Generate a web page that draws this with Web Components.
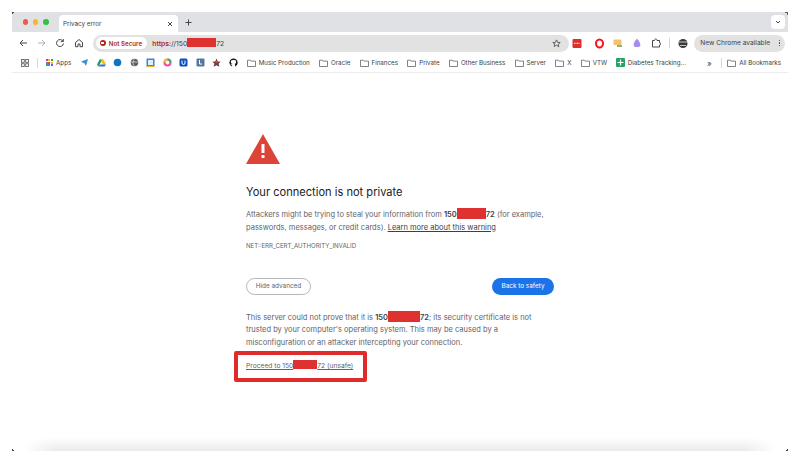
<!DOCTYPE html>
<html>
<head>
<meta charset="utf-8">
<title>Privacy error</title>
<style>
  html, body { margin: 0; height: 100%; background: #fff; }
  body { font-family: Inter, "Liberation Sans", sans-serif; overflow: hidden; }
</style>
</head>
<body>
<browser-window>
  <tab-strip slot="top"></tab-strip>
  <browser-toolbar slot="top"></browser-toolbar>
  <bookmark-bar slot="top"></bookmark-bar>
  <privacy-page></privacy-page>
</browser-window>

<script>
const FOLDER = `<svg width="9" height="8" viewBox="0 0 9 8" fill="none" stroke="#5f6368" stroke-width=".8"><path d="M.5 1.2h2.7l.8.9h4.5v5.4H.5z"/></svg>`;

class BlackOut extends HTMLElement {
  connectedCallback() {
    const w = this.getAttribute("w");
    const h = this.getAttribute("h") || 11;
    const a = this.getAttribute("a") || -2;
    const shadow = this.attachShadow({ mode: "open" });
    shadow.innerHTML = `<style>
      :host { display: inline-block; width: ${w}px; height: ${h}px; background: #e03131; vertical-align: ${a}px; }
    </style>`;
  }
}

class BrowserWindow extends HTMLElement {
  connectedCallback() {
    const shadow = this.attachShadow({ mode: "open" });
    shadow.innerHTML = `<style>
      :host { display: block; position: relative; margin: 12px 12px 0; height: 439px; }
      .frame { display: flex; flex-direction: column; height: 100%; }
      .main { flex: 1; min-height: 0; position: relative; }
      .shade { position: absolute; left: 12px; right: 12px; bottom: 0; height: 14px;
        background: linear-gradient(to bottom, rgba(225,225,225,0), rgba(225,225,225,.65));
        -webkit-mask-image: linear-gradient(to right, transparent, #000 4%, #000 96%, transparent);
        mask-image: linear-gradient(to right, transparent, #000 4%, #000 96%, transparent); }
      .corner { position: absolute; width: 3px; height: 3px; }
      .tl { left: 0; top: 0; background: linear-gradient(135deg, #2c4a5a 50%, transparent 50%); }
      .tr { right: 0; top: 0; background: linear-gradient(225deg, #3d6a70 50%, transparent 50%); }
      .bl { left: 0; bottom: 0; background: linear-gradient(45deg, #1f4f78 50%, transparent 50%); }
      .br { right: 0; bottom: 0; background: linear-gradient(315deg, #1f4f78 50%, transparent 50%); }
    </style>
    <div class="frame">
      <slot name="top"></slot>
      <div class="main"><slot></slot><div class="shade"></div></div>
    </div>
    <i class="corner tl"></i><i class="corner tr"></i><i class="corner bl"></i><i class="corner br"></i>`;
  }
}

class TabStrip extends HTMLElement {
  connectedCallback() {
    const shadow = this.attachShadow({ mode: "open" });
    shadow.innerHTML = `<style>
      :host { display: flex; align-items: flex-end; height: 20px; background: #dfe1e5; position: relative; }
      .lights { display: flex; gap: 4.6px; padding-left: 10.5px; width: 36.5px; box-sizing: border-box; height: 100%; align-items: center; margin-right: 10.5px; }
      .lights i { width: 6px; height: 6px; border-radius: 50%; }
      .tab { width: 119px; height: 17px; background: #fff; border-radius: 4px 4px 0 0; display: flex; align-items: center;
        padding: 0 5px 0 4px; box-sizing: border-box; font-size: 6.3px; color: #3c4043; justify-content: space-between; }
      .plus { margin-left: 7px; height: 100%; display: flex; align-items: center; }
      .drop { margin-left: auto; margin-right: 3px; align-self: flex-start; margin-top: 3px; width: 14px; height: 14px; background: #fff;
        border-radius: 4px; display: flex; align-items: center; justify-content: center; }
    </style>
    <div class="lights"><i style="background:#f2564f"></i><i style="background:#f9b62c"></i><i style="background:#2fc340"></i></div>
    <div class="tab"><span>Privacy error</span>
      <svg width="6" height="6" viewBox="0 0 6 6" stroke="#45474a" stroke-width="1"><path d="M1 1l4 4M5 1L1 5"/></svg></div>
    <div class="plus"><svg width="7" height="7" viewBox="0 0 7 7" stroke="#45474a" stroke-width="1"><path d="M3.5 .5v6M.5 3.5h6"/></svg></div>
    <div class="drop"><svg width="6" height="4" viewBox="0 0 6 4" fill="none" stroke="#45474a" stroke-width="1"><path d="M1 1l2 2 2-2"/></svg></div>`;
  }
}

class BrowserToolbar extends HTMLElement {
  connectedCallback() {
    const shadow = this.attachShadow({ mode: "open" });
    shadow.innerHTML = `<style>
      :host { display: flex; align-items: center; height: 21px; background: #fff; padding: 1px 2px 0 6px; box-sizing: border-box; }
      .nav { display: flex; gap: 8.6px; margin-right: 9.5px; }
      .nav svg { display: block; width: 10px; height: 10px; }
      .omni { width: 476px; height: 17px; border-radius: 9px; background: #e2e2e2; display: flex; align-items: center; padding: 0 8px 0 3px; box-sizing: border-box; }
      .chip { display: flex; align-items: center; gap: 3px; height: 12px; width: 51px; padding-left: 3.5px; box-sizing: border-box; background: #fff; border-radius: 6px;
        font-size: 6.2px; font-weight: 600; color: #b3261e; white-space: nowrap; }
      .dot { width: 6px; height: 6px; border-radius: 50%; background: #b3261e; position: relative; flex: none; }
      .dot::after { content: ""; position: absolute; left: 1.5px; top: 2.4px; width: 3px; height: 1.2px; background: #fff; }
      .url { margin-left: 5px; font-size: 6.8px; color: #3c4043; white-space: nowrap; flex: 1; }
      .url b { color: #b3261e; font-weight: 600; }
      .exts { display: flex; align-items: center; margin-left: 3px; }
      .pill { margin-left: 6px; width: 91px; height: 17px; border-radius: 9px; background: #e2e2e2; display: flex; align-items: center; justify-content: space-between;
        padding: 0 5px 0 6px; box-sizing: border-box; font-size: 6.6px; color: #3c4043; white-space: nowrap; }
      .kebab { display: flex; flex-direction: column; gap: 1px; }
      .kebab i { width: 1.4px; height: 1.4px; background: #3c4043; border-radius: 50%; }
      .sep { width: 1px; height: 10px; background: #d5d5d5; margin: 0 8px 0 8px; }
    </style>
    <div class="nav">
      <svg viewBox="0 0 10 10" fill="none" stroke="#45474a" stroke-width="1"><path d="M9 5H2M5 2L2 5l3 3"/></svg>
      <svg viewBox="0 0 10 10" fill="none" stroke="#b0b2b5" stroke-width="1"><path d="M1 5h7M5 2l3 3-3 3"/></svg>
      <svg viewBox="0 0 10 10" fill="none" stroke="#45474a" stroke-width="1"><path d="M8 3.2A3.5 3.5 0 1 0 8.5 5.5M8.3 1v2.6H5.7"/></svg>
      <svg viewBox="0 0 10 10" fill="none" stroke="#45474a" stroke-width="1"><path d="M1.5 4.5L5 1.5l3.5 3v4.2H6V6H4v2.7H1.5z"/></svg>
    </div>
    <div class="omni">
      <div class="chip"><span class="dot"></span>Not Secure</div>
      <div class="url"><b>https:</b>//150<black-out w="29" h="9" a="-1.5"></black-out>72</div>
      <svg width="9" height="9" viewBox="0 0 10 10" fill="none" stroke="#45474a" stroke-width=".9"><path d="M5 1l1.2 2.7 2.9.3-2.2 1.9.7 2.9L5 6.8 2.4 8.3l.7-2.9L.9 4l2.9-.3z"/></svg>
    </div>
    <div class="exts">
      <svg width="11" height="11" viewBox="0 0 11 11"><rect x=".5" y="1" width="9" height="9" rx="1" fill="#d9302c"/><path d="M2 5.3h6" stroke="#fff" stroke-width="1" stroke-dasharray="1 .5"/></svg>
      <svg style="margin-left:11px" width="11" height="11" viewBox="0 0 11 11"><ellipse cx="5.5" cy="5.5" rx="3.5" ry="4" fill="none" stroke="#f01424" stroke-width="2"/></svg>
      <svg style="margin-left:8px" width="10" height="10" viewBox="0 0 10 10"><rect x=".5" y="1.5" width="8" height="5.5" rx="1" fill="#f4c26a"/><path d="M4 8h5" stroke="#5aa04a" stroke-width="1.5"/></svg>
      <svg style="margin-left:9px" width="10" height="10" viewBox="0 0 10 10"><path d="M5 .8C7 2.5 8.8 6 8.2 8 7.5 9.3 2.5 9.3 1.8 8 1.2 6 3 2.5 5 .8z" fill="#a48cf0"/></svg>
      <svg style="margin-left:9px" width="10" height="10" viewBox="0 0 10 10" fill="none" stroke="#45474a" stroke-width="1"><path d="M1.5 2.500h2c0-2 2.500-2 2.500 0h2.500V4.500c1.500 0 1.500 2.500 0 2.500V9H1.500z"/></svg>
      <span class="sep"></span>
      <svg width="10" height="11" viewBox="0 0 10 11"><circle cx="5" cy="5.5" r="4.5" fill="#3a3a3a"/><path d="M1 4h8M2 7.500h6" stroke="#d8d8d8" stroke-width=".9"/></svg>
    </div>
    <div class="pill"><span>New Chrome available</span><span class="kebab"><i></i><i></i><i></i></span></div>`;
  }
}

class BookmarkItem extends HTMLElement {
  connectedCallback() {
    const shadow = this.attachShadow({ mode: "open" });
    shadow.innerHTML = `<style>
      :host { display: flex; align-items: center; gap: 3px; font-size: 6.2px; color: #3c4043; white-space: nowrap; }
      svg { display: block; flex: none; }
    </style>${FOLDER}<slot></slot>`;
  }
}

class BookmarkBar extends HTMLElement {
  connectedCallback() {
    const shadow = this.attachShadow({ mode: "open" });
    const fav = [
      `<path d="M1 3.5L8 1 6 8 4.5 5.5z" fill="#3d8fd6"/>`,
      `<path d="M3 1h3l3 5.5H6z" fill="#fbbc04"/><path d="M3 1L0 6.5 1.5 8.5 4.5 3z" fill="#1a9c5a"/><path d="M1.5 8.5h6L9 6.5H3z" fill="#2f6fdf"/>`,
      `<circle cx="4.5" cy="4.5" r="3.8" fill="#0a75c9"/>`,
      `<circle cx="4.5" cy="4.5" r="3.8" fill="#5b5e63"/><path d="M1 4h7M4.5 1c-2 2-2 5 0 7" stroke="#ddd" stroke-width=".8" fill="none"/>`,
      `<rect x=".5" y=".5" width="8" height="8" fill="#3f80e0"/><rect x="2" y="2" width="5" height="5" fill="#e7edf6"/><path d="M.5 8.5h8" stroke="#f2b92f"/>`,
      `<circle cx="4.5" cy="4.5" r="3" fill="none" stroke="#ec4fa0" stroke-width="2"/><path d="M4.5 1.5a3 3 0 0 1 3 3" fill="none" stroke="#37b56a" stroke-width="2"/><path d="M1.5 4.5a3 3 0 0 1 3-3" fill="none" stroke="#f6c02c" stroke-width="2"/>`,
      `<rect x=".5" y=".5" width="8" height="8" rx="1.5" fill="#0b4fc0"/><path d="M3 2.5v2.5a1.5 1.5 0 0 0 3 0V2.5" stroke="#fff" fill="none"/>`,
      `<rect x=".5" y=".5" width="8" height="8" rx="1" fill="#54789f"/><path d="M3.5 2v4H6" stroke="#fff" fill="none"/>`,
      `<path d="M4.5 .5l1.2 3 3 .3-2.2 2 1 3-3-1.5-3 1.5 1-3-2.2-2 3-.3z" fill="#6a3b3b"/><circle cx="4.5" cy="4" r="1.2" fill="#d64545"/>`,
      `<path d="M4.5 .5a4.2 4.2 0 0 0-1.4 8.1V7.100c-1.200.2-1.500-.6-1.600-1 .5.100.9.500 1.600.5 0-.4.200-.6.300-.8C1.500 5.500 1.600 3 2.500 2.500c.2-.4.200-.5.800-.3.800-.2 1.600-.2 2.400 0 .6-.2.600-.1.800.3.900.5 1 3-.9 3.300.2.300.4.600.4 1v1.800A4.200 4.200 0 0 0 4.500 .5z" fill="#18181a"/>`
    ];
    const appsDots = ["#ea4335","#fbbc04","#34a853","#4285f4","#ea4335","#fbbc04","#34a853","#4285f4","#a142f4"];
    shadow.innerHTML = `<style>
      :host { display: flex; align-items: center; height: 20px; background: #fff; border-bottom: 1px solid #ececec; box-sizing: border-box; padding: 0 7px 0 9px; font-size: 6.2px; color: #3c4043; white-space: nowrap; }
      svg { display: block; flex: none; }
      .sep { width: 1px; height: 10px; background: #d8d8d8; }
      .apps { display: grid; grid-template-columns: repeat(3, 2px); gap: .8px; margin: 0 3px 0 7.5px; }
      .apps i { width: 2px; height: 2px; }
      .favs { display: flex; gap: 7.5px; margin-left: 9px; margin-right: 9px; }
      .folders { display: flex; align-items: center; gap: 9.3px; }
      .more { margin-left: 21px; font-size: 8px; }
      .end { margin-left: auto; }
    </style>
    <svg width="8" height="8" viewBox="0 0 8 8" fill="none" stroke="#5f6368" stroke-width=".9" style="margin-right:8px"><rect x=".5" y=".5" width="2.8" height="2.8"/><rect x="4.7" y=".5" width="2.8" height="2.8"/><rect x=".5" y="4.7" width="2.8" height="2.8"/><rect x="4.7" y="4.7" width="2.8" height="2.8"/></svg>
    <span class="sep"></span>
    <div class="apps">${appsDots.map(c => `<i style="background:${c}"></i>`).join("")}</div>
    <span>Apps</span>
    <div class="favs">${fav.map(p => `<svg width="9" height="9" viewBox="0 0 9 9">${p}</svg>`).join("")}</div>
    <div class="folders">
      <bookmark-item>Music Production</bookmark-item>
      <bookmark-item>Oracle</bookmark-item>
      <bookmark-item>Finances</bookmark-item>
      <bookmark-item>Private</bookmark-item>
      <bookmark-item>Other Business</bookmark-item>
      <bookmark-item>Server</bookmark-item>
      <bookmark-item>X</bookmark-item>
      <bookmark-item>VTW</bookmark-item>
      <span style="display:flex;align-items:center;gap:2.5px"><svg width="9" height="9" viewBox="0 0 9 9"><rect width="9" height="9" rx="1" fill="#21a464"/><path d="M4.5 1.5v6M1.5 4.5h6" stroke="#fff" stroke-width="1.2"/></svg>Diabetes Tracking...</span>
    </div>
    <span class="more">»</span>
    <span class="sep" style="margin-left:9px"></span>
    <bookmark-item class="end">All Bookmarks</bookmark-item>`;
  }
}

class PrivacyPage extends HTMLElement {
  connectedCallback() {
    const shadow = this.attachShadow({ mode: "open" });
    shadow.innerHTML = `<style>
      :host { display: block; height: 100%; background: #fff; color: #5f6368; font-size: 7.5px; line-height: 12.5px; position: relative; }
      .wrap { width: 308px; margin: 0 auto; padding-top: 61px; }
      .icon { display: block; width: 34px; height: 30px; }
      h1 { font-size: 11.1px; font-weight: 400; color: #202124; margin: 20px 0 7px; line-height: 17px; }
      p { margin: 0; }
      b { font-weight: 600; color: #3c4043; }
      a { color: inherit; text-decoration: underline; }
      p a { color: #3c4043; }
      .code { font-size: 6.1px; margin-top: 6px; text-transform: uppercase; }
      .buttons { display: flex; justify-content: space-between; align-items: center; margin-top: 25px; }
      button { font: inherit; font-size: 6.4px; height: 17px; border-radius: 9px; padding: 0; box-sizing: border-box; }
      .hide { width: 65px; background: #fff; color: #5f6368; border: 1px solid #b5b7ba; }
      .safe { width: 62px; background: #1a73e8; color: #fff; border: 0; }
      .details { margin-top: 16px; }
      .proceed { margin-top: 10.500px; font-size: 6.7px; }
      .mark { position: absolute; left: 222px; top: 278px; width: 133px; height: 31px; box-sizing: border-box; border: 4px solid #e02b2b; border-radius: 2px; }
    </style>
    <div class="wrap">
      <svg class="icon" viewBox="0 0 34 30"><path d="M17 0l17 30H0z" fill="#db4437"/><rect x="15.5" y="10" width="3" height="9" fill="#fff"/><rect x="15.5" y="21" width="3" height="3" fill="#fff"/></svg>
      <h1>Your connection is not private</h1>
      <p>Attackers might be trying to steal your information from <b>150<black-out w="29"></black-out>72</b> (for example, passwords, messages, or credit cards). <a href="#">Learn more about this warning</a></p>
      <div class="code">NET::ERR_CERT_AUTHORITY_INVALID</div>
      <div class="buttons"><button class="hide">Hide advanced</button><button class="safe">Back to safety</button></div>
      <p class="details">This server could not prove that it is <b>150<black-out w="32"></black-out>72</b>; its security certificate is not trusted by your computer's operating system. This may be caused by a misconfiguration or an attacker intercepting your connection.</p>
      <div class="proceed"><a href="#">Proceed to 150<black-out w="24" h="9" a="-1.5"></black-out>72 (unsafe)</a></div>
    </div>
    <div class="mark"></div>`;
  }
}

customElements.define("black-out", BlackOut);
customElements.define("browser-window", BrowserWindow);
customElements.define("tab-strip", TabStrip);
customElements.define("browser-toolbar", BrowserToolbar);
customElements.define("bookmark-item", BookmarkItem);
customElements.define("bookmark-bar", BookmarkBar);
customElements.define("privacy-page", PrivacyPage);
</script>
</body>
</html>
